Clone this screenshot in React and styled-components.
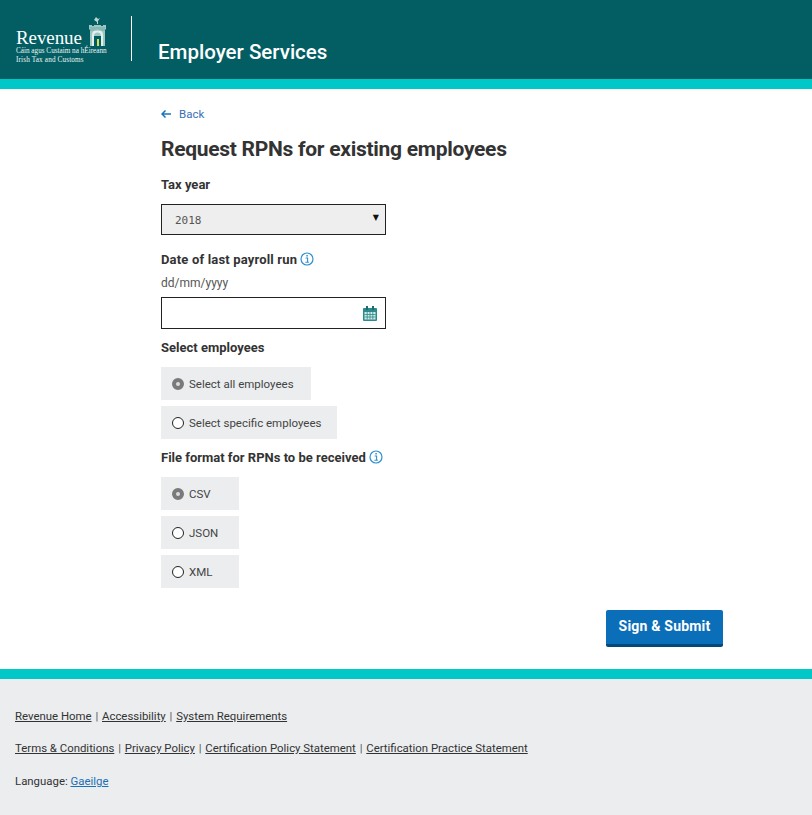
import React from 'react';
import styled, { createGlobalStyle } from 'styled-components';

const GlobalStyle = createGlobalStyle`
  html, body {
    margin: 0;
    padding: 0;
    background: #fff;
    font-family: Roboto, "Noto Sans", sans-serif;
    color: #333;
  }
`;

const TowerLogo = () => (
  <svg width="19" height="30" viewBox="0 0 19 30">
    <path d="M8 0l2 2 2-1-2 3v3H9V5L6 3z" fill="#b9d8d2" />
    <path d="M1 8h3v1h2V8h7v1h2V8h3v4l-1 1v16H2V13l-1-1z" fill="#9cc8c1" />
    <path d="M4 29V18a5.5 5.5 0 0 1 11 0v11h-2V19a3.5 3.5 0 0 0-7 0v10z" fill="#e4f0ee" />
    <rect x="6" y="19" width="7" height="10" fill="#025e63" />
    <rect x="9" y="22" width="2" height="7" fill="#d8e04f" />
    <path d="M2 11h15M2 13h15" stroke="#5f9f9b" strokeWidth="0.7" />
  </svg>
);

const InfoIcon = () => (
  <InfoSvg viewBox="0 0 14 14">
    <circle cx="7" cy="7" r="6" fill="none" stroke="#2f8fd0" strokeWidth="1.2" />
    <rect x="6.3" y="3" width="1.5" height="1.5" fill="#2f8fd0" />
    <path d="M5.6 6h2v4.2h1M5.4 10.3h3.4" fill="none" stroke="#2f8fd0" strokeWidth="1.1" />
  </InfoSvg>
);

const CalendarIcon = () => (
  <CalendarSvg viewBox="0 0 14 15">
    <rect x="0" y="2" width="14" height="13" rx="1" fill="#2a8a8c" />
    <rect x="3" y="0" width="2" height="4" fill="#1f6d70" />
    <rect x="9" y="0" width="2" height="4" fill="#1f6d70" />
    <rect x="1.5" y="6" width="11" height="7.5" fill="#d5e8e8" />
    <path d="M1.5 8.5h11M1.5 11h11M4.2 6v7.5M7 6v7.5M9.8 6v7.5" stroke="#2a8a8c" strokeWidth="0.8" />
  </CalendarSvg>
);

const Radio = ({ label, checked, wide }) => (
  <RadioTile $width={wide}>
    <RadioDot $checked={checked} />
    <span>{label}</span>
  </RadioTile>
);

const App = () => (
  <Page>
    <GlobalStyle />
    <Header>
      <Logo>
        <LogoTop>
          <LogoWord>Revenue</LogoWord>
          <TowerLogo />
        </LogoTop>
        <LogoLine>Cáin agus Custaim na hÉireann</LogoLine>
        <LogoLine>Irish Tax and Customs</LogoLine>
      </Logo>
      <HeaderDivider />
      <HeaderTitle>Employer Services</HeaderTitle>
    </Header>
    <Band />
    <Main>
      <BackLink href="#">
        <svg width="10" height="8" viewBox="0 0 10 8">
          <path d="M4.5 0.5L1 4l3.5 3.5M1 4h9" fill="none" stroke="#1a75bb" strokeWidth="1.5" />
        </svg>
        Back
      </BackLink>
      <Title>Request RPNs for existing employees</Title>
      <TaxLabel>Tax year</TaxLabel>
      <SelectBox>
        <SelectValue>2018</SelectValue>
        <SelectArrow>▼</SelectArrow>
      </SelectBox>
      <DateLabel>
        Date of last payroll run <InfoIcon />
      </DateLabel>
      <Hint>dd/mm/yyyy</Hint>
      <DateBox>
        <CalendarIcon />
      </DateBox>
      <SectionLabel>Select employees</SectionLabel>
      <RadioGroup>
        <Radio label="Select all employees" checked wide="150px" />
        <Radio label="Select specific employees" wide="176px" />
      </RadioGroup>
      <SectionLabel>
        File format for RPNs to be received <InfoIcon />
      </SectionLabel>
      <RadioGroup>
        <Radio label="CSV" checked wide="78px" />
        <Radio label="JSON" wide="78px" />
        <Radio label="XML" wide="78px" />
      </RadioGroup>
      <Actions>
        <SubmitButton>Sign &amp; Submit</SubmitButton>
      </Actions>
    </Main>
    <Band />
    <Footer>
      <FooterRow>
        <FooterLink href="#">Revenue Home</FooterLink> <Sep>|</Sep>{' '}
        <FooterLink href="#">Accessibility</FooterLink> <Sep>|</Sep>{' '}
        <FooterLink href="#">System Requirements</FooterLink>
      </FooterRow>
      <FooterRow>
        <FooterLink href="#">Terms &amp; Conditions</FooterLink> <Sep>|</Sep>{' '}
        <FooterLink href="#">Privacy Policy</FooterLink> <Sep>|</Sep>{' '}
        <FooterLink href="#">Certification Policy Statement</FooterLink> <Sep>|</Sep>{' '}
        <FooterLink href="#">Certification Practice Statement</FooterLink>
      </FooterRow>
      <FooterRow>
        Language: <LangLink href="#">Gaeilge</LangLink>
      </FooterRow>
    </Footer>
  </Page>
);

export default App;

const Page = styled.div`
  width: 812px;
  height: 815px;
  overflow: hidden;
`;

const Header = styled.header`
  height: 79px;
  background: #025e63;
  display: flex;
  padding-left: 16px;
  box-sizing: border-box;
`;

const Logo = styled.div`
  width: 100px;
  padding-top: 17px;
  color: #fff;
  font-family: "Liberation Serif", serif;
`;

const LogoTop = styled.div`
  display: flex;
  align-items: flex-end;
  justify-content: space-between;
  width: 91px;
  height: 30px;
`;

const LogoWord = styled.span`
  font-size: 19px;
  line-height: 19px;
  letter-spacing: -0.1px;
`;

const LogoLine = styled.div`
  font-size: 7.2px;
  line-height: 8.5px;
  white-space: nowrap;
  color: #eef5f5;
  &:first-of-type {
    margin-top: 2px;
  }
  &:last-of-type {
    letter-spacing: 0.15px;
  }
`;

const HeaderDivider = styled.div`
  width: 1px;
  height: 45px;
  margin: 16px 0 0 15px;
  background: #fff;
`;

const HeaderTitle = styled.h1`
  margin: 39px 0 0 26px;
  font-size: 20.5px;
  line-height: 26px;
  font-weight: 500;
  color: #fff;
`;

const Band = styled.div`
  height: 10px;
  background: #00c8c8;
`;

const Main = styled.main`
  width: 562px;
  height: 580px;
  margin-left: 161px;
  padding-top: 18px;
  box-sizing: border-box;
`;

const BackLink = styled.a`
  display: flex;
  align-items: center;
  gap: 8px;
  height: 14px;
  font-size: 11.5px;
  color: #3a6fb5;
  text-decoration: none;
`;

const Title = styled.h2`
  margin: 14px 0 0;
  font-size: 21px;
  line-height: 28px;
  font-weight: 700;
  letter-spacing: -0.28px;
  color: #333;
  white-space: nowrap;
`;

const Label = styled.div`
  display: flex;
  align-items: center;
  gap: 3px;
  height: 16px;
  font-size: 13px;
  font-weight: 700;
  color: #333;
`;

const TaxLabel = styled(Label)`
  margin-top: 13px;
`;

const SelectBox = styled.div`
  position: relative;
  display: flex;
  align-items: center;
  width: 225px;
  height: 31px;
  margin-top: 12px;
  padding: 1px 0 0 13px;
  box-sizing: border-box;
  border: 1px solid #222;
  background: #eeeeee;
`;

const SelectValue = styled.span`
  font-family: "DejaVu Sans Mono", monospace;
  font-size: 11px;
  color: #555;
`;

const SelectArrow = styled.span`
  position: absolute;
  right: 6px;
  top: 8px;
  font-family: "DejaVu Sans", sans-serif;
  font-size: 8px;
  color: #111;
`;

const DateLabel = styled(Label)`
  margin-top: 16px;
  letter-spacing: 0.17px;
`;

const InfoSvg = styled.svg`
  width: 14px;
  height: 14px;
`;

const Hint = styled.div`
  margin-top: 8px;
  height: 16px;
  font-size: 12px;
  line-height: 16px;
  color: #555;
`;

const DateBox = styled.div`
  display: flex;
  align-items: center;
  justify-content: flex-end;
  width: 225px;
  height: 32px;
  margin-top: 6px;
  padding-right: 8px;
  box-sizing: border-box;
  border: 1px solid #222;
  background: #fff;
`;

const CalendarSvg = styled.svg`
  width: 14px;
  height: 15px;
`;

const SectionLabel = styled(Label)`
  margin-top: 10px;
`;

const RadioGroup = styled.div`
  display: flex;
  flex-direction: column;
  gap: 6px;
  margin-top: 12px;
`;

const RadioTile = styled.div`
  display: flex;
  align-items: center;
  gap: 5px;
  width: ${(p) => p.$width};
  height: 33px;
  padding-left: 11px;
  box-sizing: border-box;
  background: #ebedef;
  font-size: 11.5px;
  color: #444;
`;

const RadioDot = styled.span`
  width: 12px;
  height: 12px;
  border-radius: 50%;
  box-sizing: border-box;
  flex: none;
  border: ${(p) => (p.$checked ? '4px solid #7a7a7a' : '1.5px solid #222')};
  background: ${(p) => (p.$checked ? '#ddd' : '#fff')};
`;

const Actions = styled.div`
  display: flex;
  justify-content: flex-end;
  margin-top: 22px;
`;

const SubmitButton = styled.button`
  width: 117px;
  height: 37px;
  padding: 0 0 3px;
  border: none;
  border-bottom: 3px solid #05487a;
  border-radius: 2px;
  background: #0a6eb9;
  color: #fff;
  font-family: inherit;
  font-size: 14px;
  font-weight: 700;
  letter-spacing: 0.2px;
`;

const Footer = styled.footer`
  height: 136px;
  padding: 29px 15px 0;
  box-sizing: border-box;
  background: #ebedef;
  font-size: 11.4px;
  color: #333;
`;

const FooterRow = styled.div`
  height: 16px;
  line-height: 16px;
  margin-bottom: 16px;
  white-space: nowrap;
  &:nth-child(2) {
    margin-bottom: 17px;
  }
`;

const FooterLink = styled.a`
  color: #333;
  text-decoration: underline;
`;

const Sep = styled.span`
  margin: 0 1px;
  color: #555;
`;

const LangLink = styled.a`
  color: #1a6fb5;
  text-decoration: underline;
`;
